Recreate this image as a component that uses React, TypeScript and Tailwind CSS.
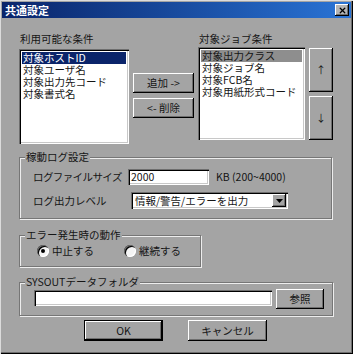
import { X } from 'lucide-react';

const out = 'shadow-[inset_-1px_-1px_0_#000,inset_1px_1px_0_#fff,inset_-2px_-2px_0_#6e6e6e]';
const sunk = 'shadow-[inset_1px_1px_0_#6e6e6e,inset_2px_2px_0_#000,inset_-1px_-1px_0_#fff,inset_-2px_-2px_0_#c8c8c8]';
const etched = 'border border-[#767676] shadow-[1px_1px_0_#ededed,inset_1px_1px_0_#ededed]';

function Btn({ label, className = '' }: { label: string; className?: string }) {
  return (
    <div className={`flex items-center justify-center whitespace-nowrap bg-[#a4a4a4] ${out} ${className}`}>
      {label}
    </div>
  );
}

function Radio({ on }: { on?: boolean }) {
  return (
    <span className="flex h-[12px] w-[12px] shrink-0 items-center justify-center rounded-full bg-[#f4f4f4] shadow-[inset_1px_1px_0_#6e6e6e,inset_2px_2px_0_#000,inset_-1px_-1px_0_#fff]">
      {on && <span className="h-[4px] w-[4px] rounded-full bg-black" />}
    </span>
  );
}

export default function App() {
  const left = ['対象ホストID', '対象ユーザ名', '対象出力先コード', '対象書式名'];
  const right = ['対象出力クラス', '対象ジョブ名', '対象FCB名', '対象用紙形式コード'];

  return (
    <div className="flex h-[354px] w-[353px] flex-col whitespace-nowrap bg-[#a4a4a4] font-['Noto_Sans_CJK_JP',sans-serif] text-[10.5px] leading-[12px] text-[#151515] shadow-[inset_1px_1px_0_#dcdcdc,inset_-1px_-1px_0_#000,inset_-2px_-2px_0_#6e6e6e]">
      {/* title bar */}
      <div className="mx-[2px] mt-[2px] flex h-[16px] items-center justify-between bg-gradient-to-r from-[#0a246a] to-[#2a74d6] pl-[3px] pr-[2px]">
        <span className="text-[11px] font-bold text-white">共通設定</span>
        <div className={`flex h-[12px] w-[14px] items-center justify-center bg-[#b4b4b4] ${out}`}>
          <X size={9} strokeWidth={3.5} color="#000" />
        </div>
      </div>

      {/* condition lists */}
      <div className="ml-[19px] mt-[14px] flex">
        <div className="flex w-[110px] flex-col">
          <div className="h-[14px] pl-[1px] leading-[14px]">利用可能な条件</div>
          <div className={`mt-[3px] h-[95px] overflow-hidden bg-white p-[3px] ${sunk}`}>
            {left.map((t, i) => (
              <div key={t} className={`h-[12px] pl-[1px] leading-[12px] ${i === 0 ? 'bg-[#0a246a] text-white' : ''}`}>{t}</div>
            ))}
          </div>
        </div>
        <div className="ml-[4px] flex flex-col gap-[5px] pt-[41px]">
          <Btn label="追加 ->" className="h-[20px] w-[61px]" />
          <Btn label="<- 削除" className="h-[20px] w-[61px]" />
        </div>
        <div className="ml-[4px] flex w-[107px] flex-col">
          <div className="h-[14px] pl-[1px] leading-[14px]">対象ジョブ条件</div>
          <div className={`mt-[1px] h-[93px] overflow-hidden bg-white p-[3px] ${sunk}`}>
            {right.map((t, i) => (
              <div key={t} className={`h-[12px] pl-[1px] leading-[12px] ${i === 0 ? 'bg-[#8e8e8e]' : ''}`}>{t}</div>
            ))}
          </div>
        </div>
        <div className="ml-[4px] flex flex-col gap-[4px] pt-[16px]">
          <Btn label="↑" className="h-[44px] w-[24px] text-[10px]" />
          <Btn label="↓" className="h-[44px] w-[24px] text-[10px]" />
        </div>
      </div>

      {/* log settings */}
      <div className={`relative ml-[19px] mt-[13px] h-[62px] w-[313px] ${etched}`}>
        <span className="absolute -top-[8px] left-[5px] bg-[#a4a4a4] px-[1px] leading-[14px]">稼動ログ設定</span>
        <div className="flex flex-col pl-[13px] pt-[11px]">
          <div className="flex h-[16px] items-center">
            <span className="w-[95px] tracking-[-0.6px]">ログファイルサイズ</span>
            <div className={`flex h-[16px] w-[81px] items-center bg-white pl-[3px] ${sunk}`}>2000</div>
            <span className="ml-[7px]">KB (200~4000)</span>
          </div>
          <div className="mt-[7px] flex h-[17px] items-center">
            <span className="w-[98px]">ログ出力レベル</span>
            <div className={`flex h-[17px] w-[157px] items-center justify-between bg-white pl-[4px] pr-[2px] ${sunk}`}>
              <span>情報/警告/エラーを出力</span>
              <div className={`flex h-[13px] w-[14px] items-center justify-center bg-[#a4a4a4] ${out}`}>
                <svg width="7" height="4" viewBox="0 0 7 4"><path d="M0 0h7L3.5 4z" fill="#000" /></svg>
              </div>
            </div>
          </div>
        </div>
      </div>

      {/* error action */}
      <div className={`relative ml-[19px] mt-[16px] h-[32px] w-[182px] ${etched}`}>
        <span className="absolute -top-[8px] left-[5px] bg-[#a4a4a4] px-[1px] leading-[14px]">エラー発生時の動作</span>
        <div className="flex items-center pl-[17px] pt-[9px]">
          <Radio on />
          <span className="ml-[3px] w-[72px]">中止する</span>
          <Radio />
          <span className="ml-[3px]">継続する</span>
        </div>
      </div>

      {/* sysout folder */}
      <div className={`relative ml-[19px] mt-[15px] h-[34px] w-[314px] ${etched}`}>
        <span className="absolute -top-[8px] left-[5px] bg-[#a4a4a4] px-[1px] leading-[14px]">SYSOUTデータフォルダ</span>
        <div className="flex items-start pl-[14px] pt-[6px]">
          <div className={`mt-[1px] h-[16px] w-[238px] bg-white ${sunk}`} />
          <Btn label="参照" className="ml-[4px] h-[20px] w-[48px]" />
        </div>
      </div>

      {/* dialog buttons */}
      <div className="ml-[84px] mt-[4px] flex gap-[25px]">
        <div className="border border-black">
          <Btn label="OK" className="h-[19px] w-[77px]" />
        </div>
        <Btn label="キャンセル" className="h-[21px] w-[79px]" />
      </div>
    </div>
  );
}
